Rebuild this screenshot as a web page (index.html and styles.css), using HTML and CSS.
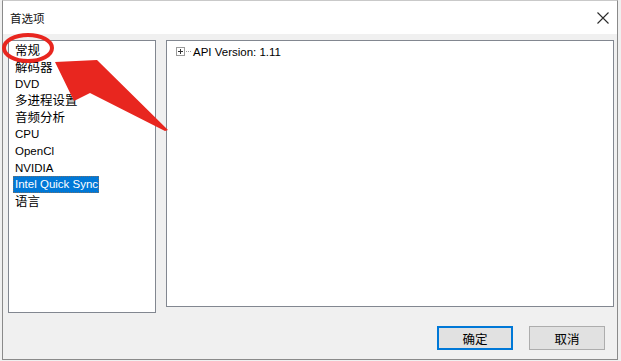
FILE: index.html
```html
<!DOCTYPE html>
<html lang="zh">
<head>
<meta charset="utf-8">
<title>首选项</title>
<link rel="stylesheet" href="styles.css">
</head>
<body>
<div class="window">
  <div class="titlebar">
    <span class="title">首选项</span>
    <svg class="close" width="12" height="12" viewBox="0 0 12 12"><path d="M0.5 0.5L11.5 11.5M11.5 0.5L0.5 11.5" stroke="#2b2b2b" stroke-width="1.1" fill="none"/></svg>
  </div>
  <div class="body">
    <div class="list">
      <div class="item cjk">常规</div>
      <div class="item cjk">解码器</div>
      <div class="item latin">DVD</div>
      <div class="item cjk">多进程设置</div>
      <div class="item cjk">音频分析</div>
      <div class="item latin">CPU</div>
      <div class="item latin">OpenCl</div>
      <div class="item latin">NVIDIA</div>
      <div class="item latin sel"><span class="hl">Intel Quick Sync</span></div>
      <div class="item cjk">语言</div>
    </div>
    <div class="right">
      <div class="tree">
        <div class="node">
          <svg class="expander" width="9" height="9" viewBox="0 0 9 9"><rect x="0.5" y="0.5" width="8" height="8" fill="#fff" stroke="#9a9a9a"/><path d="M2 4.5H7M4.5 2V7" stroke="#333" stroke-width="1"/></svg>
          <span class="dots"></span>
          <span class="label">API Version: 1.11</span>
        </div>
      </div>
      <div class="buttons">
        <button class="btn default">确定</button>
        <button class="btn">取消</button>
      </div>
    </div>
  </div>
</div>
<svg class="annot" width="621" height="361" viewBox="0 0 621 361">
  <ellipse cx="28" cy="48" rx="24" ry="13" fill="none" stroke="#e8261f" stroke-width="4"/>
  <polygon points="55,62 97,60 168,130 165,131 90,93 74,101" fill="#e8261f"/>
</svg>
</body>
</html>
```
FILE: styles.css
```css
html { background: #f0f0f0; }
body { margin: 0; }

.window {
  margin-left: 2px;
  width: 616px;
  height: 360px;
  box-sizing: border-box;
  border: 1px solid #8a8a8a;
  border-top-color: #c9c9c9;
  background: #f0f0f0;
  display: flex;
  flex-direction: column;
}

.titlebar {
  height: 33px;
  flex: none;
  background: #fff;
  display: flex;
  align-items: center;
  justify-content: space-between;
  padding: 0 8px 0 7px;
}
.title {
  font-family: "Noto Sans CJK SC", sans-serif;
  font-size: 11.5px;
  color: #111;
  margin-top: 1px;
}
.close { display: block; margin-top: 1px; }

.body {
  display: flex;
  gap: 10px;
  padding: 6px 3px 0 5px;
}

.list {
  width: 148px;
  height: 273px;
  box-sizing: border-box;
  border: 1px solid #828790;
  background: #fff;
  padding-top: 1px;
}
.item {
  height: 16.8px;
  line-height: 16.8px;
  padding-left: 6px;
  color: #000;
  white-space: nowrap;
}
.cjk { font-family: "Noto Sans CJK SC", sans-serif; font-size: 12.5px; }
.latin { font-family: "Liberation Sans", sans-serif; font-size: 11.5px; }
.hl {
  display: inline-block;
  height: 17px;
  line-height: 17px;
  vertical-align: top;
  margin-left: -2px;
  padding: 0 1px 0 2px;
  background: #0078d7;
  color: #fff;
  outline: 1px dotted #6f6f6f;
  outline-offset: -1px;
}

.right {
  width: 448px;
  display: flex;
  flex-direction: column;
}
.tree {
  height: 267px;
  box-sizing: border-box;
  border: 1px solid #828790;
  background: #fff;
  padding: 2px 0 0 9px;
}
.node {
  display: flex;
  align-items: center;
  height: 17px;
}
.expander { display: block; flex: none; }
.dots {
  width: 5px;
  border-top: 1px dotted #9a9a9a;
  margin: 0 2px 0 1px;
}
.label {
  font-family: "Liberation Sans", sans-serif;
  font-size: 11.5px;
  color: #000;
}

.buttons {
  display: flex;
  justify-content: flex-end;
  gap: 16px;
  margin-top: 19px;
  padding-right: 9px;
}
.btn {
  width: 76px;
  height: 24px;
  padding: 0;
  box-sizing: border-box;
  background: #e1e1e1;
  border: 1px solid #adadad;
  font-family: "Noto Sans CJK SC", sans-serif;
  font-size: 12.5px;
  color: #000;
}
.btn.default {
  border-color: #0078d7;
  box-shadow: inset 0 0 0 1px #0078d7;
}

.annot {
  position: absolute;
  top: 0;
  left: 0;
  pointer-events: none;
}
```
